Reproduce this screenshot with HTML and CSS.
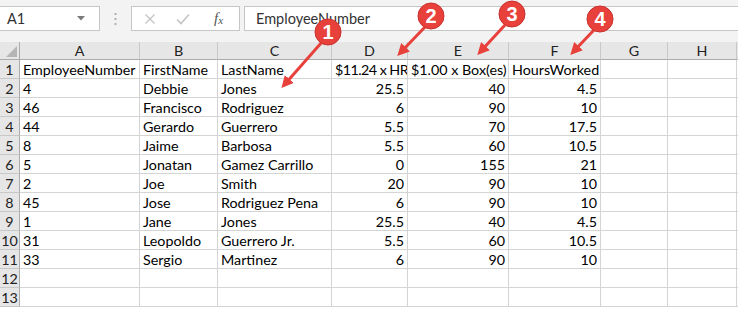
FILE: index.html
```html
<!DOCTYPE html>
<html>
<head>
<meta charset="utf-8">
<link rel="stylesheet" href="styles.css">
</head>
<body>
<div class="app">
  <div class="toolbar">
    <div class="namebox">
      <span class="ref">A1</span>
      <svg class="caret" width="8" height="5" viewBox="0 0 8 5"><path d="M0 0H8L4 4.5Z" fill="#7a7a7a"/></svg>
    </div>
    <div class="grip">
      <svg width="3" height="12" viewBox="0 0 3 12"><rect x="0.5" y="0" width="2" height="2" fill="#b0b0b0"/><rect x="0.5" y="5" width="2" height="2" fill="#b0b0b0"/><rect x="0.5" y="10" width="2" height="2" fill="#b0b0b0"/></svg>
    </div>
    <div class="fxbox">
      <svg class="ico" width="12" height="12" viewBox="0 0 12 12"><path d="M1.5 1.5L10.5 10.5M10.5 1.5L1.5 10.5" stroke="#c4c4c4" stroke-width="1.3" fill="none"/></svg>
      <svg class="ico" width="14" height="12" viewBox="0 0 14 12"><path d="M1 6.5L5 10.5L13 1.5" stroke="#c4c4c4" stroke-width="1.6" fill="none"/></svg>
      <span class="fx">f<sub>x</sub></span>
    </div>
    <div class="formula">EmployeeNumber</div>
  </div>

  <div class="sheet">
    <div class="corner"></div>
    <div class="ch">A</div><div class="ch">B</div><div class="ch">C</div><div class="ch">D</div><div class="ch">E</div><div class="ch">F</div><div class="ch">G</div><div class="ch">H</div><div class="ch last"></div>

    <div class="rh">1</div><div class="c">EmployeeNumber</div><div class="c">FirstName</div><div class="c">LastName</div><div class="c tight">$11.24 x HR</div><div class="c">$1.00 x Box(es)</div><div class="c">HoursWorked</div><div class="c"></div><div class="c"></div><div class="c last"></div>

    <div class="rh">2</div><div class="c">4</div><div class="c">Debbie</div><div class="c">Jones</div><div class="c n">25.5</div><div class="c n">40</div><div class="c n">4.5</div><div class="c"></div><div class="c"></div><div class="c last"></div>

    <div class="rh">3</div><div class="c">46</div><div class="c">Francisco</div><div class="c">Rodriguez</div><div class="c n">6</div><div class="c n">90</div><div class="c n">10</div><div class="c"></div><div class="c"></div><div class="c last"></div>

    <div class="rh">4</div><div class="c">44</div><div class="c">Gerardo</div><div class="c">Guerrero</div><div class="c n">5.5</div><div class="c n">70</div><div class="c n">17.5</div><div class="c"></div><div class="c"></div><div class="c last"></div>

    <div class="rh">5</div><div class="c">8</div><div class="c">Jaime</div><div class="c">Barbosa</div><div class="c n">5.5</div><div class="c n">60</div><div class="c n">10.5</div><div class="c"></div><div class="c"></div><div class="c last"></div>

    <div class="rh">6</div><div class="c">5</div><div class="c">Jonatan</div><div class="c">Gamez Carrillo</div><div class="c n">0</div><div class="c n">155</div><div class="c n">21</div><div class="c"></div><div class="c"></div><div class="c last"></div>

    <div class="rh">7</div><div class="c">2</div><div class="c">Joe</div><div class="c">Smith</div><div class="c n">20</div><div class="c n">90</div><div class="c n">10</div><div class="c"></div><div class="c"></div><div class="c last"></div>

    <div class="rh">8</div><div class="c">45</div><div class="c">Jose</div><div class="c">Rodriguez Pena</div><div class="c n">6</div><div class="c n">90</div><div class="c n">10</div><div class="c"></div><div class="c"></div><div class="c last"></div>

    <div class="rh">9</div><div class="c">1</div><div class="c">Jane</div><div class="c">Jones</div><div class="c n">25.5</div><div class="c n">40</div><div class="c n">4.5</div><div class="c"></div><div class="c"></div><div class="c last"></div>

    <div class="rh">10</div><div class="c">31</div><div class="c">Leopoldo</div><div class="c">Guerrero Jr.</div><div class="c n">5.5</div><div class="c n">60</div><div class="c n">10.5</div><div class="c"></div><div class="c"></div><div class="c last"></div>

    <div class="rh">11</div><div class="c">33</div><div class="c">Sergio</div><div class="c">Martinez</div><div class="c n">6</div><div class="c n">90</div><div class="c n">10</div><div class="c"></div><div class="c"></div><div class="c last"></div>

    <div class="rh">12</div><div class="c"></div><div class="c"></div><div class="c"></div><div class="c"></div><div class="c"></div><div class="c"></div><div class="c"></div><div class="c"></div><div class="c last"></div>

    <div class="rh">13</div><div class="c"></div><div class="c"></div><div class="c"></div><div class="c"></div><div class="c"></div><div class="c"></div><div class="c"></div><div class="c"></div><div class="c last"></div>
  </div>

  <svg class="marks" width="738" height="309" viewBox="0 0 738 309">
    <defs>
      <marker id="ah" markerWidth="4" markerHeight="4" refX="2.2" refY="2" orient="auto" markerUnits="strokeWidth">
        <path d="M0 0L4 2L0 4Z" fill="#e8413c"/>
      </marker>
    </defs>
    <g stroke="#e8413c" stroke-width="3" fill="none" marker-end="url(#ah)">
      <line x1="322" y1="42" x2="285" y2="84"/>
      <line x1="425" y1="27" x2="401" y2="52"/>
      <line x1="505" y1="25" x2="481" y2="51"/>
      <line x1="594" y1="30" x2="574" y2="51"/>
    </g>
    <g class="badge">
      <circle cx="328" cy="32" r="13"/>
      <circle cx="431" cy="16" r="13"/>
      <circle cx="512" cy="14" r="13"/>
      <circle cx="600" cy="19" r="13"/>
    </g>
    <g class="num">
      <text x="328" y="39">1</text>
      <text x="431" y="23">2</text>
      <text x="512" y="21">3</text>
      <text x="600" y="26">4</text>
    </g>
  </svg>
</div>
</body>
</html>
```

FILE: styles.css
```css
html, body {
  margin: 0;
  padding: 0;
  background: #ffffff;
}

.app {
  position: relative;
  width: 738px;
  height: 309px;
  overflow: hidden;
  font-family: Lato, "Open Sans", sans-serif;
}

.toolbar {
  display: flex;
  align-items: flex-start;
  height: 42px;
  box-sizing: border-box;
  padding-top: 6px;
  background: #f3f3f3;
}

.namebox {
  box-sizing: border-box;
  width: 101px;
  height: 25px;
  margin-left: -1px;
  background: #fff;
  border: 1px solid #c6c6c6;
  display: flex;
  align-items: center;
  padding-left: 7px;
  padding-right: 14px;
}

.ref {
  flex: 1;
  font-size: 14.5px;
  color: #333;
}

.grip {
  width: 31px;
  height: 25px;
  display: flex;
  align-items: center;
  justify-content: center;
}

.fxbox {
  box-sizing: border-box;
  width: 109px;
  height: 25px;
  background: #fff;
  border: 1px solid #c6c6c6;
  display: flex;
  align-items: center;
  padding-left: 12px;
  gap: 20px;
}

.fx {
  font-family: "Liberation Serif", serif;
  font-style: italic;
  font-size: 15px;
  color: #555;
  margin-left: 4px;
}

.fx sub {
  font-size: 11px;
  vertical-align: -1px;
}

.formula {
  flex: 1;
  box-sizing: border-box;
  height: 25px;
  margin-left: 4px;
  margin-right: -2px;
  background: #fff;
  border: 1px solid #c6c6c6;
  padding-left: 11px;
  font-size: 14.5px;
  color: #333;
  line-height: 23px;
}

.sheet {
  display: grid;
  grid-template-columns: 20px 120px 78px 114px 76px 101px 92px 67px 69px 1px;
  grid-template-rows: 18px repeat(13, 19px);
  font-size: 14.3px;
  color: #000;
}

.sheet > div {
  box-sizing: border-box;
  border-right: 1px solid #d4d4d4;
  border-bottom: 1px solid #d4d4d4;
  white-space: nowrap;
  overflow: hidden;
  line-height: 19px;
}

.corner {
  position: relative;
  background: #e6e6e6;
  border-right-color: #ababab !important;
  border-bottom-color: #ababab !important;
}

.corner::after {
  content: "";
  position: absolute;
  right: 2px;
  bottom: 2px;
  width: 0;
  height: 0;
  border-left: 11px solid transparent;
  border-bottom: 11px solid #b5b5b5;
}

.ch {
  background: #e6e6e6;
  text-align: center;
  color: #222;
  border-right-color: #c8c8c8 !important;
  border-bottom-color: #ababab !important;
  line-height: 18px !important;
}

.rh {
  background: #e6e6e6;
  text-align: center;
  color: #222;
  border-right-color: #ababab !important;
  border-bottom-color: #c8c8c8 !important;
}

.c {
  padding: 0 3px;
}

.c.tight {
  padding: 0 1px 0 3px;
  letter-spacing: -0.55px;
}

.c.n {
  text-align: right;
}

.last {
  border-right: none !important;
}

.marks {
  position: absolute;
  left: 0;
  top: 0;
  pointer-events: none;
}

.badge circle {
  fill: #e8413c;
  stroke: #c9302b;
  stroke-width: 1;
}

.num text {
  fill: #fff;
  font-family: "Liberation Sans", Arial, sans-serif;
  font-weight: bold;
  font-size: 20px;
  text-anchor: middle;
}
```
